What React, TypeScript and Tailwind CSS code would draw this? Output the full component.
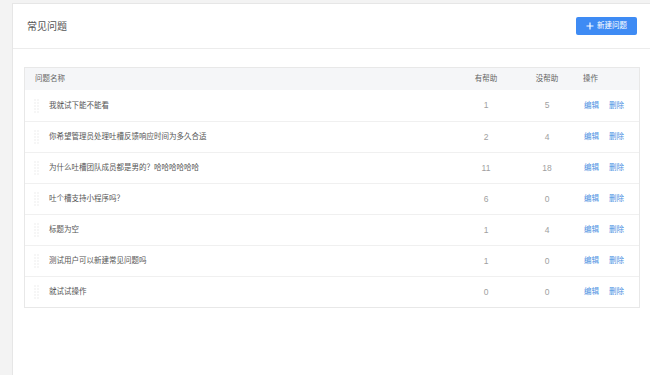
import React from 'react'

interface Faq {
  title: string
  helpful: number
  unhelpful: number
}

const faqs: Faq[] = [
  { title: '我就试下能不能看', helpful: 1, unhelpful: 5 },
  { title: '你希望管理员处理吐槽反馈响应时间为多久合适', helpful: 2, unhelpful: 4 },
  { title: '为什么吐槽团队成员都是男的？哈哈哈哈哈哈', helpful: 11, unhelpful: 18 },
  { title: '吐个槽支持小程序吗？', helpful: 6, unhelpful: 0 },
  { title: '标题为空', helpful: 1, unhelpful: 4 },
  { title: '测试用户可以新建常见问题吗', helpful: 1, unhelpful: 0 },
  { title: '就试试操作', helpful: 0, unhelpful: 0 },
]

const DragHandle = () => (
  <svg width="6" height="14" viewBox="0 0 6 14" className="shrink-0">
    {[1, 4, 7, 10, 13].map((y) => (
      <React.Fragment key={y}>
        <rect x="0.5" y={y - 0.5} width="1" height="1" fill="#dcdcdc" />
        <rect x="3.5" y={y - 0.5} width="1" height="1" fill="#dcdcdc" />
      </React.Fragment>
    ))}
  </svg>
)

export default function App() {
  return (
    <div
      className="w-[650px] h-[375px] overflow-hidden bg-[#f3f3f3] pl-[12px] pt-[3px] flex"
      style={{ fontFamily: '"Noto Sans", "Noto Sans CJK SC", sans-serif' }}
    >
      <div className="flex-1 bg-white border-l border-t border-[#e6e6e6] flex flex-col">
        {/* header */}
        <div className="h-[45px] border-b border-[#ececec] flex items-center justify-between pl-[14px] pr-[13px]">
          <span className="text-[10px] text-[#555]">常见问题</span>
          <button
            type="button"
            className="h-[18px] w-[61px] rounded-[2px] bg-[#3e8bf4] text-white flex items-center justify-center gap-[3px] text-[7.5px]"
          >
            <svg width="8" height="8" viewBox="0 0 8 8">
              <path d="M4 0.5V7.5M0.5 4H7.5" stroke="white" strokeWidth="1.2" />
            </svg>
            新建问题
          </button>
        </div>

        {/* table */}
        <div className="mt-[18px] ml-[11px] mr-[10px] border border-[#e8e8e8]">
          <div className="grid grid-cols-[1fr_60px_62px_61px] h-[22px] items-center bg-[#f5f6f8] text-[7.5px] text-[#666]">
            <span className="pl-[10px]">问题名称</span>
            <span className="text-center">有帮助</span>
            <span className="text-center">没帮助</span>
            <span className="pl-[5px]">操作</span>
          </div>
          {faqs.map((f, i) => (
            <div
              key={i}
              className={`grid grid-cols-[1fr_60px_62px_61px] h-[31px] items-center text-[7.5px] ${
                i > 0 ? 'border-t border-[#f0f0f0]' : ''
              }`}
            >
              <div className="flex items-center pl-[9px] gap-[9px]">
                <DragHandle />
                <span className="text-[#555]">{f.title}</span>
              </div>
              <span className="text-center text-[#a0a0a0] text-[8.5px] font-['Liberation_Sans',sans-serif]">
                {f.helpful}
              </span>
              <span className="text-center text-[#a0a0a0] text-[8.5px] font-['Liberation_Sans',sans-serif]">
                {f.unhelpful}
              </span>
              <div className="flex gap-[10px] pl-[6px] text-[#4a90e2]">
                <span>编辑</span>
                <span>删除</span>
              </div>
            </div>
          ))}
        </div>
      </div>
    </div>
  )
}
